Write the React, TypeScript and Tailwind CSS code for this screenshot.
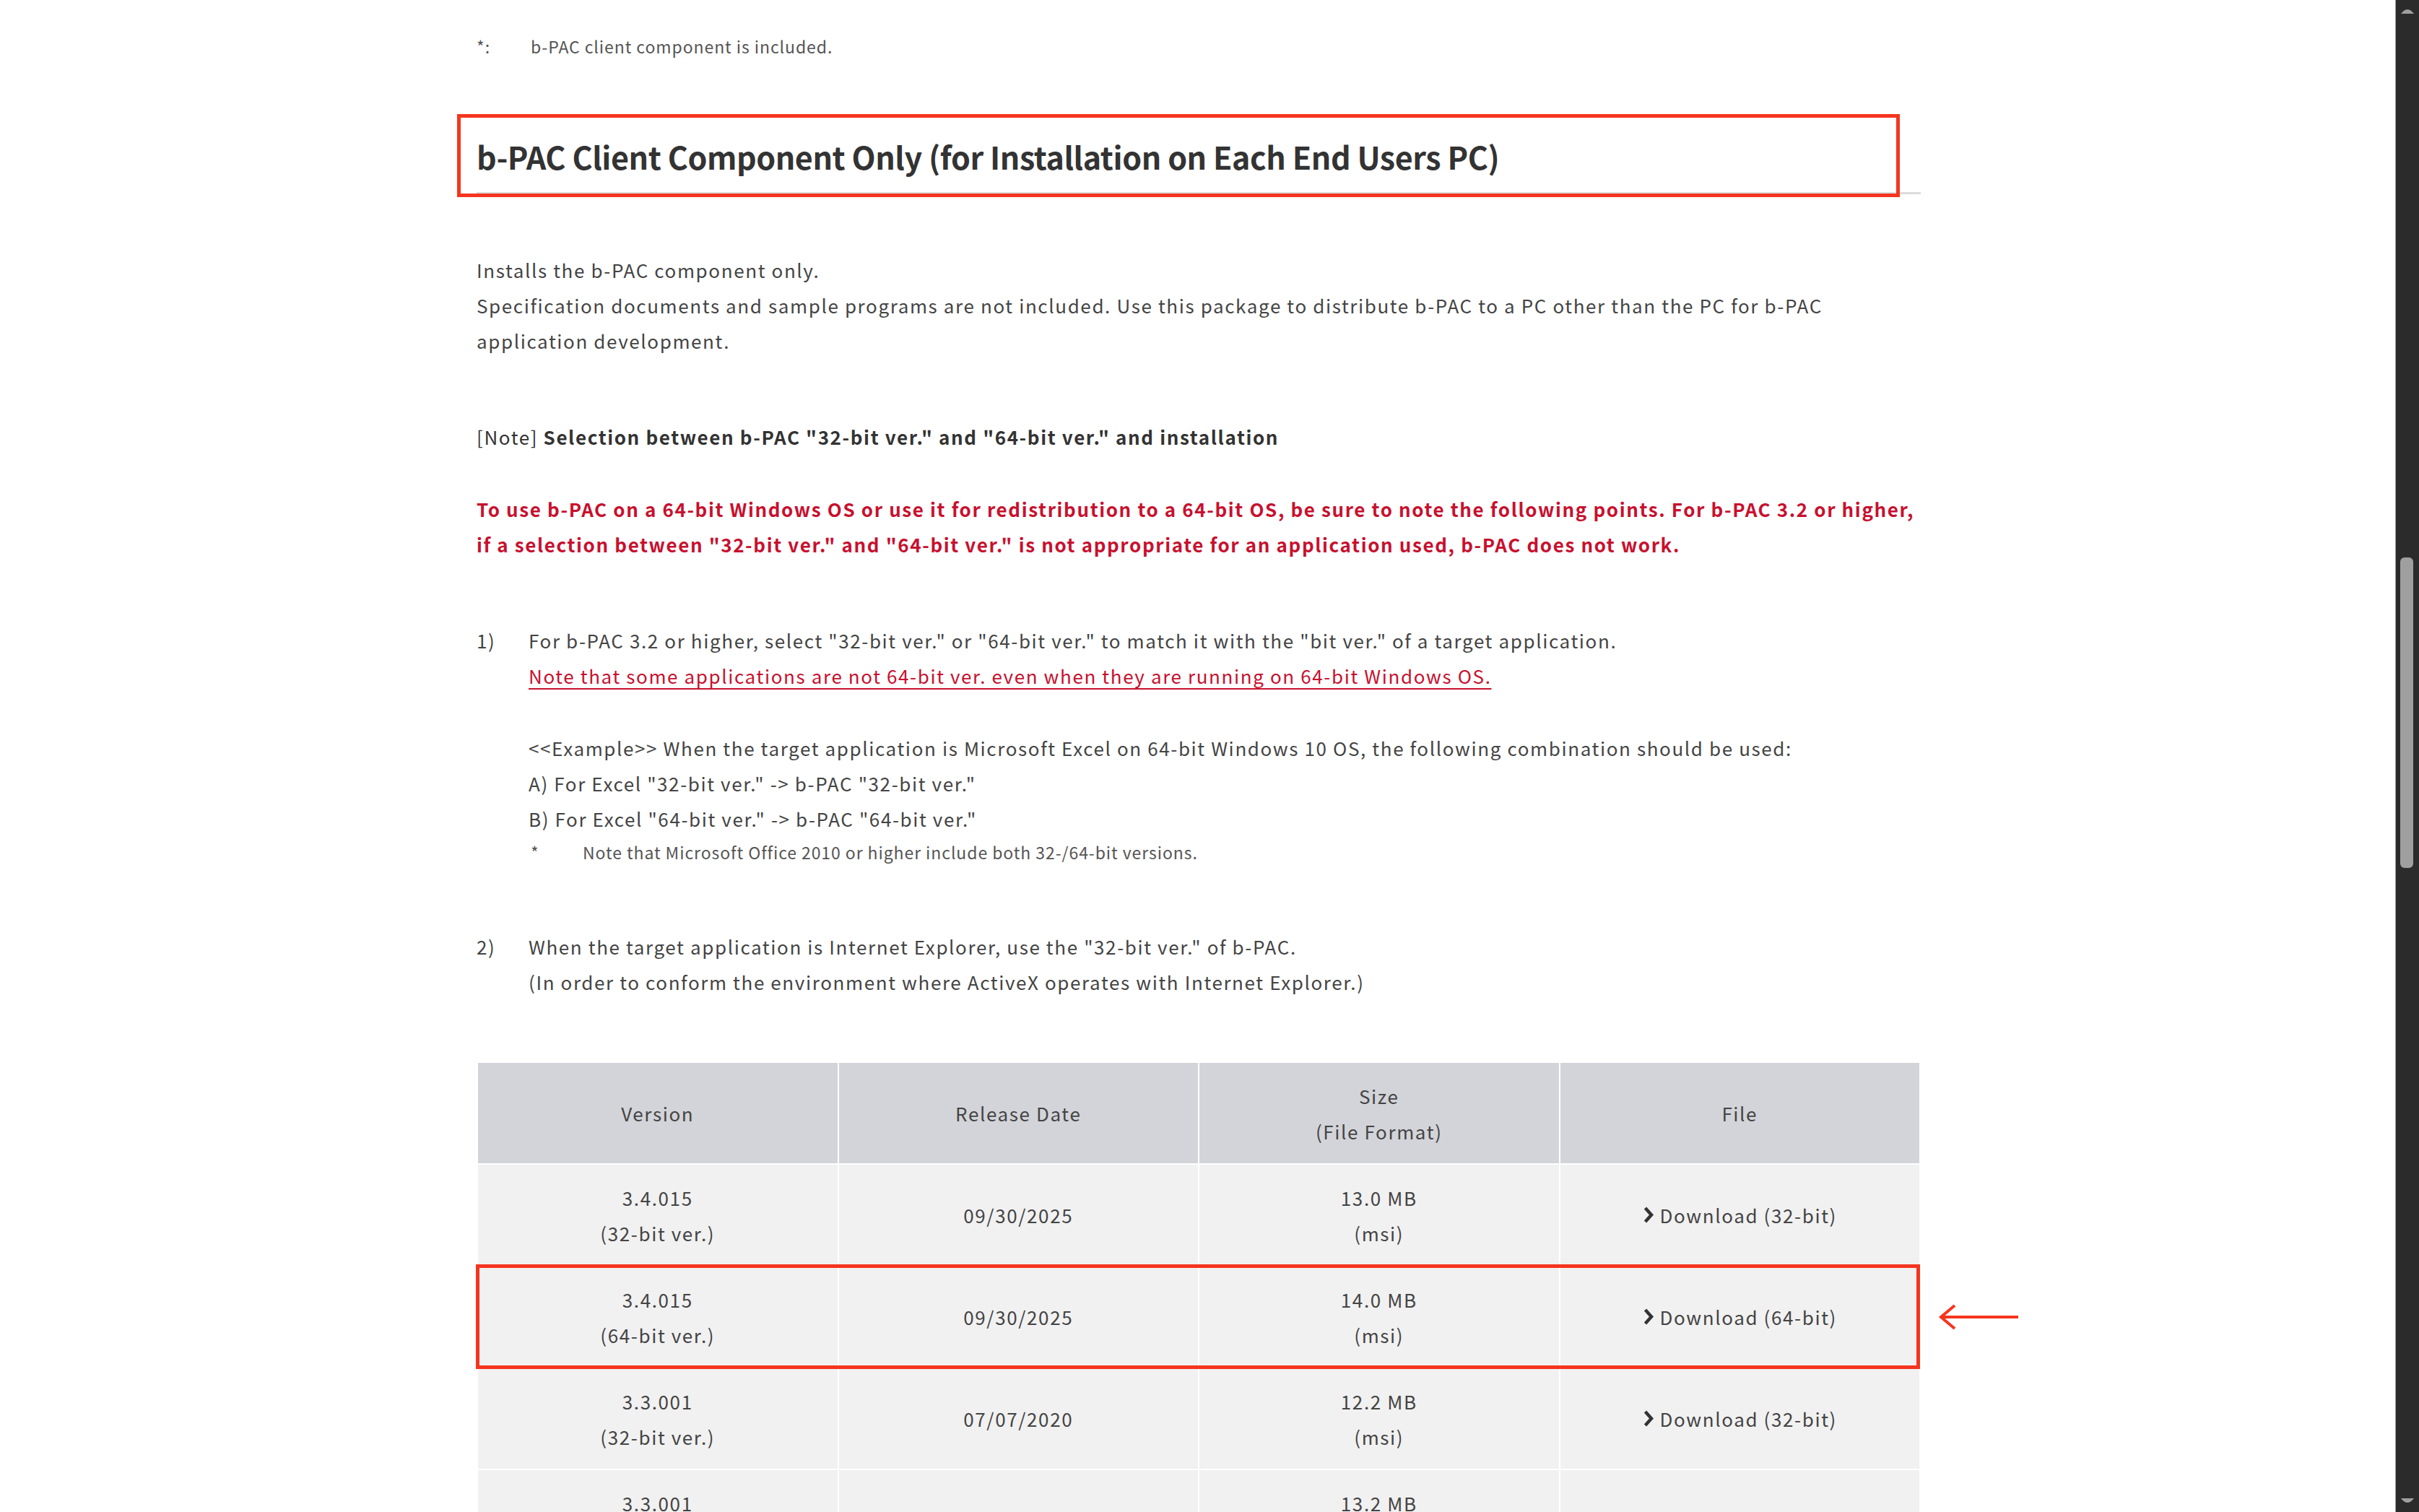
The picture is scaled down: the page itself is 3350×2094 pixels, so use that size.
import React from "react";

const Chevron = () => (
  <svg width="16" height="23" viewBox="0 0 16 23" className="shrink-0">
    <path d="M3.5 2 L12 11.5 L3.5 21" fill="none" stroke="#333" strokeWidth="4.5" />
  </svg>
);

type Row = { ver: string; bit: string; date: string; size: string; dl: string };

const rows: Row[] = [
  { ver: "3.4.015", bit: "(32-bit ver.)", date: "09/30/2025", size: "13.0 MB", dl: "Download (32-bit)" },
  { ver: "3.4.015", bit: "(64-bit ver.)", date: "09/30/2025", size: "14.0 MB", dl: "Download (64-bit)" },
  { ver: "3.3.001", bit: "(32-bit ver.)", date: "07/07/2020", size: "12.2 MB", dl: "Download (32-bit)" },
  { ver: "3.3.001", bit: "(64-bit ver.)", date: "07/07/2020", size: "13.2 MB", dl: "Download (64-bit)" },
];

export default function App() {
  return (
    <div className="flex h-[2094px] w-[3350px] overflow-hidden bg-white font-['Noto_Sans_CJK_JP',sans-serif] text-[#444]">
      <main className="relative flex-1">
        <div className="ml-[660px] w-[2000px] pt-[40px]">
          <div className="flex text-[23px] leading-[48px] text-[#555] tracking-[0.04em]">
            <span className="w-[75px] shrink-0">*:</span>
            <span>b-PAC client component is included.</span>
          </div>

          <div className="relative mt-[97px]">
            <h2 className="border-b-[3px] border-[#dcdcdc] pb-[19px] text-[43px] font-bold leading-[62px] text-[#333] tracking-[-0.01em]">
              b-PAC Client Component Only (for Installation on Each End Users PC)
            </h2>
            <div className="pointer-events-none absolute left-[-27px] top-[-27px] h-[115px] w-[1998px] border-[5px] border-[#f5351f]" />
          </div>

          <div className="text-[26px] leading-[49px] tracking-[0.062em]">
            <p className="mt-[80px]">
              Installs the b-PAC component only.
              <br />
              Specification documents and sample programs are not included. Use this package to distribute b-PAC to a PC other than the PC for b-PAC
              <br />
              application development.
            </p>

            <p className="mt-[84px] text-[#333]">
              [Note] <span className="font-bold">Selection between b-PAC "32-bit ver." and "64-bit ver." and installation</span>
            </p>

            <p className="mt-[51px] font-bold text-[#c8102e]">
              To use b-PAC on a 64-bit Windows OS or use it for redistribution to a 64-bit OS, be sure to note the following points. For b-PAC 3.2 or higher,
              <br />
              if a selection between "32-bit ver." and "64-bit ver." is not appropriate for an application used, b-PAC does not work.
            </p>

            <div className="mt-[84px] flex">
              <span className="w-[72px] shrink-0">1)</span>
              <div>
                <p>For b-PAC 3.2 or higher, select "32-bit ver." or "64-bit ver." to match it with the "bit ver." of a target application.</p>
                <p>
                  <a className="text-[#c8102e] underline decoration-[2px] underline-offset-[6px]">
                    Note that some applications are not 64-bit ver. even when they are running on 64-bit Windows OS.
                  </a>
                </p>
                <p className="mt-[51px]">
                  &lt;&lt;Example&gt;&gt; When the target application is Microsoft Excel on 64-bit Windows 10 OS, the following combination should be used:
                </p>
                <p>A) For Excel "32-bit ver." -&gt; b-PAC "32-bit ver."</p>
                <p>B) For Excel "64-bit ver." -&gt; b-PAC "64-bit ver."</p>
                <div className="flex text-[23px] leading-[44px] text-[#555] tracking-[0.04em]">
                  <span className="w-[75px] shrink-0 pl-[3px]">*</span>
                  <span>Note that Microsoft Office 2010 or higher include both 32-/64-bit versions.</span>
                </div>
              </div>
            </div>

            <div className="mt-[84px] flex">
              <span className="w-[72px] shrink-0">2)</span>
              <div>
                <p>When the target application is Internet Explorer, use the "32-bit ver." of b-PAC.</p>
                <p>(In order to conform the environment where ActiveX operates with Internet Explorer.)</p>
              </div>
            </div>

            <div className="relative mt-[86px]">
              <table className="w-[2000px] table-fixed border-separate border-spacing-[2px] text-center">
                <thead>
                  <tr>
                    <th className="h-[139px] bg-[#d3d4d9] font-normal">Version</th>
                    <th className="h-[139px] bg-[#d3d4d9] font-normal">Release Date</th>
                    <th className="h-[139px] bg-[#d3d4d9] font-normal">
                      Size
                      <br />
                      (File Format)
                    </th>
                    <th className="h-[139px] bg-[#d3d4d9] font-normal">File</th>
                  </tr>
                </thead>
                <tbody>
                  {rows.map((r, i) => (
                    <tr key={i}>
                      <td className="h-[139px] bg-[#f1f1f1]">
                        {r.ver}
                        <br />
                        {r.bit}
                      </td>
                      <td className="h-[139px] bg-[#f1f1f1]">{r.date}</td>
                      <td className="h-[139px] bg-[#f1f1f1]">
                        {r.size}
                        <br />
                        (msi)
                      </td>
                      <td className="h-[139px] bg-[#f1f1f1]">
                        <span className="inline-flex items-center gap-[8px]">
                          <Chevron />
                          <span>{r.dl}</span>
                        </span>
                      </td>
                    </tr>
                  ))}
                </tbody>
              </table>
              <div className="pointer-events-none absolute left-[-1px] top-[281px] h-[145px] w-[2000px] border-[5px] border-[#f5351f]" />
              <svg className="absolute left-[2023px] top-[336px]" width="114" height="36" viewBox="0 0 114 36">
                <path d="M6 18 H112" stroke="#f5351f" strokeWidth="4" fill="none" />
                <path d="M24 2 L5 18 L24 34" stroke="#f5351f" strokeWidth="4" fill="none" />
              </svg>
            </div>
          </div>
        </div>
      </main>

      <div className="flex h-full w-[33px] shrink-0 flex-col border-l border-[#a0a0a0] bg-[#2b2b2b]">
        <div className="flex h-[28px] items-center justify-center">
          <svg width="18" height="10" viewBox="0 0 18 10">
            <path d="M0 10 Q9 -2 18 10 Z" fill="#9f9f9f" />
          </svg>
        </div>
        <div className="relative flex-1">
          <div className="absolute left-[6px] top-[744px] h-[430px] w-[18px] rounded-[6px] bg-[#9f9f9f]" />
        </div>
        <div className="flex h-[28px] items-center justify-center">
          <svg width="18" height="10" viewBox="0 0 18 10">
            <path d="M0 0 Q9 12 18 0 Z" fill="#9f9f9f" />
          </svg>
        </div>
      </div>
    </div>
  );
}
